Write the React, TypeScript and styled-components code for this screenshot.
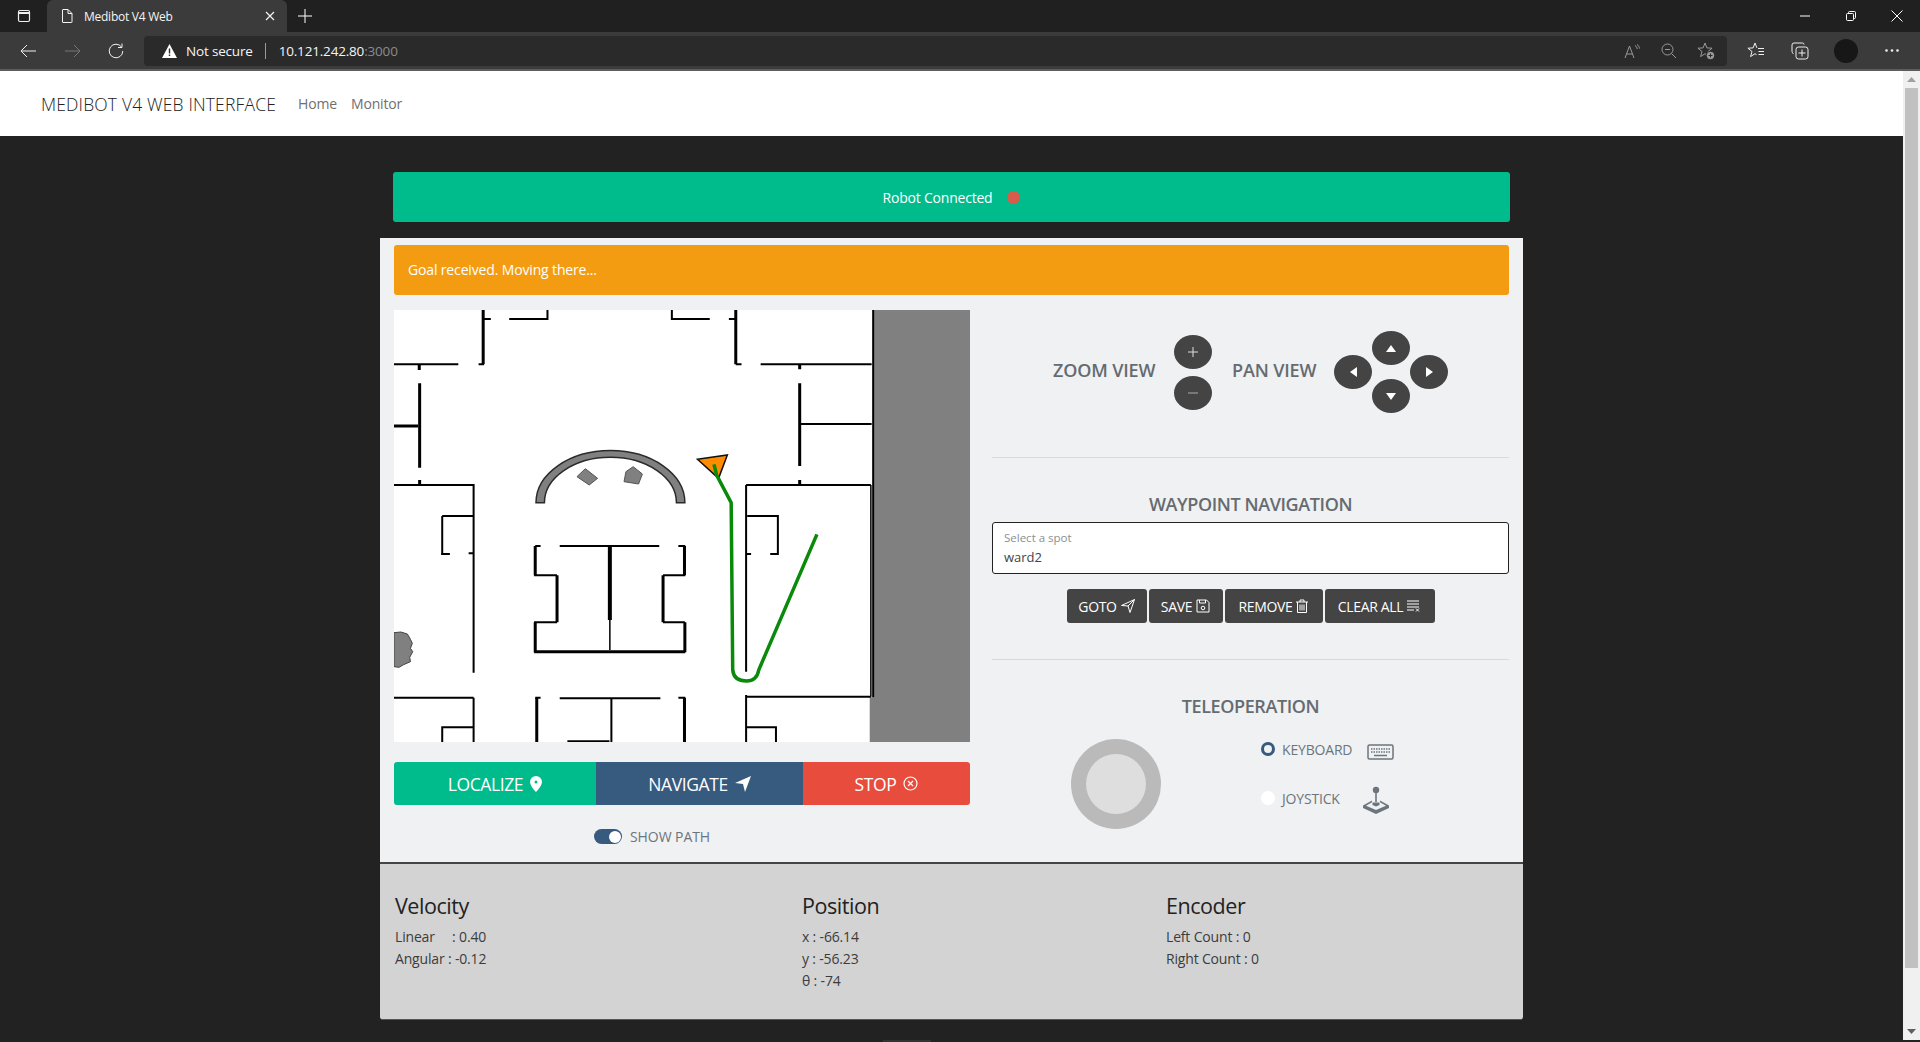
import React from "react";
import styled, { createGlobalStyle } from "styled-components";

const Global = createGlobalStyle`
  html, body { margin: 0; padding: 0; height: 100%; overflow: hidden; background: #222; }
  * { box-sizing: border-box; }
  body { font-family: "Open Sans", "Noto Sans", "Liberation Sans", sans-serif; }
`;

const Shell = styled.div`
  width: 1920px;
  height: 1042px;
  display: flex;
  flex-direction: column;
  overflow: hidden;
`;

/* ---------- browser chrome ---------- */
const TabStrip = styled.div`
  height: 32px;
  background: #202020;
  display: flex;
  align-items: flex-end;
  color: #fff;
`;
const WindowMenu = styled.div`
  width: 47px;
  height: 32px;
  display: flex;
  align-items: center;
  justify-content: center;
  color: #f0f0f0;
`;
const Tab = styled.div`
  width: 240px;
  height: 32px;
  background: #3b3b3b;
  border-radius: 6px 6px 0 0;
  display: flex;
  align-items: center;
  padding: 0 12px 0 13px;
  gap: 10px;
  font-size: 12px;
  letter-spacing: -0.25px;
  color: #f4f4f4;
`;
const TabTitle = styled.span`
  flex: 1;
`;
const NewTab = styled.div`
  width: 30px;
  height: 32px;
  display: flex;
  align-items: center;
  justify-content: center;
  margin-left: 3px;
`;
const Spacer = styled.div`
  flex: 1;
`;
const WinButton = styled.div`
  width: 46px;
  height: 32px;
  display: flex;
  align-items: center;
  justify-content: center;
`;
const ToolBar = styled.div`
  height: 39px;
  background: #3b3b3b;
  border-bottom: 2px solid #5d5d5d;
  display: flex;
  align-items: center;
  color: #f0f0f0;
`;
const NavIcon = styled.div<{ $w?: number }>`
  width: ${(p) => p.$w ?? 44}px;
  height: 30px;
  display: flex;
  align-items: center;
  justify-content: center;
`;
const AddressBar = styled.div`
  width: 1583px;
  height: 30px;
  margin: 1px 6px 0 2px;
  background: #2a2a2a;
  border-radius: 4px;
  display: flex;
  align-items: center;
  padding: 0 3px 0 18px;
  font-size: 13.5px;
  letter-spacing: -0.18px;
  color: #f5f5f5;
`;
const Secure = styled.span`
  margin-left: 9px;
`;
const Divider = styled.span`
  width: 1px;
  height: 16px;
  background: #9a9a9a;
  margin: 0 13px 0 12px;
`;
const Port = styled.span`
  color: #8b8b8b;
`;

/* ---------- page ---------- */
const Viewport = styled.div`
  flex: 1;
  display: flex;
  min-height: 0;
`;
const Page = styled.div`
  flex: 1;
  display: flex;
  flex-direction: column;
  background: #222;
  min-width: 0;
`;
const Scrollbar = styled.div`
  width: 17px;
  margin-bottom: 2px;
  background: #f0f0f0;
  display: flex;
  flex-direction: column;
  align-items: center;
`;
const ScrollArrow = styled.div`
  height: 17px;
  display: flex;
  align-items: center;
  justify-content: center;
`;
const ScrollThumb = styled.div`
  width: 13px;
  height: 880px;
  background: #c1c1c1;
`;
const NavBar = styled.nav`
  height: 65px;
  background: #fff;
  display: flex;
  align-items: center;
  padding-left: 41px;
`;
const Brand = styled.span`
  font-size: 17.5px;
  font-weight: 300;
  letter-spacing: 0.16px;
  color: #222;
  margin-right: 22px;
`;
const NavLink = styled.span`
  font-size: 14px;
  letter-spacing: -0.15px;
  color: #6f6f6f;
  margin-right: 14px;
`;
const Container = styled.div`
  width: 1143px;
  margin-left: 380px;
  display: flex;
  flex-direction: column;
`;
const Status = styled.div`
  height: 50px;
  margin: 36px 13px 16px;
  background: #00bc8c;
  border-radius: 3px;
  color: #fff;
  font-size: 14px;
  letter-spacing: -0.22px;
  display: flex;
  align-items: center;
  justify-content: center;
  gap: 15px;
`;
const StatusDot = styled.span`
  width: 13px;
  height: 13px;
  border-radius: 50%;
  background: #d85c4b;
`;
const Panel = styled.div`
  height: 624px;
  background: #eff1f3;
  padding: 7px 14px 0;
  display: flex;
  flex-direction: column;
`;
const Alert = styled.div`
  height: 50px;
  background: #f39c12;
  border-radius: 3px;
  color: #fff;
  font-size: 14px;
  letter-spacing: -0.15px;
  display: flex;
  align-items: center;
  padding: 0 0 2px 14px;
  flex-shrink: 0;
`;
const Columns = styled.div`
  display: flex;
  margin-top: 15px;
  gap: 22px;
`;
const LeftCol = styled.div`
  width: 576px;
  display: flex;
  flex-direction: column;
`;
const RightCol = styled.div`
  width: 517px;
  display: flex;
  flex-direction: column;
`;
const MapSvg = styled.svg`
  width: 576px;
  height: 432px;
  display: block;
  background: #fff;
`;
const ActionRow = styled.div`
  display: flex;
  height: 43px;
  margin-top: 20px;
`;
const ActionButton = styled.button<{ $w: number; $bg: string; $r?: string }>`
  width: ${(p) => p.$w}px;
  background: ${(p) => p.$bg};
  border: 0;
  border-radius: ${(p) => p.$r ?? "0"};
  color: #fff;
  font-family: inherit;
  font-size: 17.5px;
  letter-spacing: -0.4px;
  display: flex;
  align-items: center;
  justify-content: center;
  gap: 7px;
  padding: 0;
`;
const ToggleRow = styled.div`
  display: flex;
  align-items: center;
  margin-top: 22px;
  margin-left: 200px;
  gap: 8px;
  color: #6c757d;
  font-size: 14px;
  font-weight: 500;
  letter-spacing: -0.08px;
`;
const Toggle = styled.span`
  width: 28px;
  height: 15px;
  border-radius: 8px;
  background: #375a7f;
  position: relative;
`;
const ToggleKnob = styled.span`
  position: absolute;
  right: 1.5px;
  top: 1.5px;
  width: 12px;
  height: 12px;
  border-radius: 50%;
  background: #fff;
`;
const ViewControls = styled.div`
  height: 148px;
  display: flex;
  align-items: flex-start;
  padding-left: 61px;
  border-bottom: 1px solid #d8dade;
`;
const ViewLabel = styled.div<{ $w: number }>`
  width: ${(p) => p.$w}px;
  margin-top: 48px;
  font-size: 18px;
  line-height: 24px;
  font-weight: 600;
  letter-spacing: -0.15px;
  color: #666b70;
`;
const ZoomStack = styled.div`
  width: 38px;
  margin-top: 25px;
  margin-right: 20px;
  display: flex;
  flex-direction: column;
  gap: 7px;
`;
const Round = styled.button<{ $h?: number }>`
  width: 38px;
  height: ${(p) => p.$h ?? 34}px;
  border-radius: 50%;
  border: 0;
  padding: 0;
  background: #444;
  color: #fff;
  display: flex;
  align-items: center;
  justify-content: center;
`;
const PanGrid = styled.div`
  width: 114px;
  margin-top: 21px;
  display: grid;
  grid-template-columns: 38px 38px 38px;
  grid-template-rows: 24px 34px 24px;
`;
const PanCell = styled.div<{ $col: number; $row: string; $end?: boolean }>`
  grid-column: ${(p) => p.$col};
  grid-row: ${(p) => p.$row};
  align-self: ${(p) => (p.$end ? "end" : "start")};
`;
const SectionTitle = styled.div<{ $mt: number }>`
  margin-top: ${(p) => p.$mt}px;
  text-align: center;
  font-size: 18px;
  line-height: 24px;
  font-weight: 600;
  letter-spacing: -0.4px;
  color: #666b70;
`;
const SelectBox = styled.div`
  height: 52px;
  margin-top: 6px;
  background: #fff;
  border: 1px solid #222;
  border-radius: 3px;
  padding: 6px 11px;
`;
const SelectLabel = styled.div`
  font-size: 11.5px;
  line-height: 18px;
  color: #8a8f94;
`;
const SelectValue = styled.div`
  font-size: 13px;
  line-height: 20px;
  color: #444;
`;
const WayButtons = styled.div`
  display: flex;
  justify-content: center;
  gap: 2px;
  margin-top: 15px;
`;
const WayButton = styled.button<{ $w: number }>`
  width: ${(p) => p.$w}px;
  height: 34px;
  border: 0;
  border-radius: 3px;
  background: #444;
  color: #fff;
  font-family: inherit;
  font-size: 14px;
  letter-spacing: -0.35px;
  display: flex;
  align-items: center;
  justify-content: center;
  gap: 4px;
  padding: 0;
`;
const Rule = styled.div`
  height: 1px;
  background: #d8dade;
  margin-top: 36px;
`;
const TeleRow = styled.div`
  display: flex;
  margin-top: 21px;
`;
const JoyRing = styled.div`
  width: 90px;
  height: 90px;
  margin-left: 79px;
  border-radius: 50%;
  background: #bababa;
  display: flex;
  align-items: center;
  justify-content: center;
`;
const JoyCenter = styled.div`
  width: 60px;
  height: 60px;
  border-radius: 50%;
  background: #dedede;
`;
const ModeColumn = styled.div`
  margin-left: 100px;
  margin-top: -12px;
  display: flex;
  flex-direction: column;
`;
const ModeRow = styled.div<{ $h: number }>`
  height: ${(p) => p.$h}px;
  display: flex;
  align-items: center;
  color: #6c757d;
  font-size: 14px;
  letter-spacing: -0.18px;
`;
const Radio = styled.span<{ $on?: boolean }>`
  width: 14px;
  height: 14px;
  border-radius: 50%;
  border: ${(p) => (p.$on ? "3.5px solid #375a7f" : "0")};
  margin-right: 7px;
  background-color: ${(p) => (p.$on ? "#eff1f3" : "#fff")};
`;
const ModeIcon = styled.span<{ $ml: number; $mt: number }>`
  margin: ${(p) => p.$mt}px 0 0 ${(p) => p.$ml}px;
  display: flex;
  color: #6c757d;
`;
const Telemetry = styled.div`
  height: 158px;
  background: #d3d3d3;
  border-top: 2px solid #444;
  border-bottom: 1px solid #555;
  border-radius: 0 0 3px 3px;
  display: flex;
  padding: 28px 0 0 15px;
`;
const TeleCol = styled.div<{ $w: number }>`
  width: ${(p) => p.$w}px;
`;
const TeleTitle = styled.div`
  font-size: 21.5px;
  line-height: 28px;
  letter-spacing: -0.45px;
  color: #222;
  margin-bottom: 6px;
`;
const TeleLine = styled.div`
  font-size: 14px;
  line-height: 22px;
  letter-spacing: -0.17px;
  color: #3c3c3c;
  white-space: pre;
`;
const PageFoot = styled.div`
  width: 48px;
  height: 2px;
  margin: 20px 0 0 883px;
  background: #333;
`;

const Wall = ({ d, w = 3 }: { d: string; w?: number }) => (
  <path d={d} fill="none" stroke="#000" strokeWidth={w} vectorEffect="non-scaling-stroke" />
);

const MapView = () => (
  <MapSvg viewBox="37 30 1505 1296" preserveAspectRatio="none">
    <polygon points="1290,30 1542,30 1542,1326 1280,1326 1280,1192 1290,1192" fill="#808080" />
    <Wall w={2} d="M1289 30V1192" />
    <Wall w={1.5} d="M1283 555V1190" />
    <Wall w={2} d="M37 193H205 M258 193H272 M272 57H290 M338 57H438V30 M763 30V57H862 M912 57H930 M930 193H945 M995 193H1285 M1097 372H1285" />
    <Wall w={3} d="M270 30V193 M930 30V193 M103 193V210 M1097 193V208 M104 250V503 M1097 250V498 M104 540V555 M1097 540V555" />
    <Wall w={3} d="M37 378H100" />
    <Wall w={2} d="M37 555H245V1118 M163 648H245 M163 648V762 M160 762H183 M232 760H245" />
    <Wall w={2} d="M957 555H1283 M957 555V1115 M960 648H1040V762H1020 M957 762H970" />
    <Wall w={2} d="M406 738H420 M470 738H730 M780 738H798 M798 826H740 M797 967H740 M403 826H463 M403 967H463" />
    <Wall w={3} d="M740 826V967 M463 826V967 M406 967V1057 M797 967V1057 M406 738V826 M796 738V826" />
    <Wall w={4} d="M601 738V960" />
    <Wall w={3} d="M403 1055H798" />
    <Wall w={1.5} d="M601 960V1050" />
    <Wall w={2} d="M37 1193H245 M245 1193V1326 M163 1326V1282H245 M420 1193H406 M470 1195H733 M605 1195V1326 M780 1193H798 M955 1190H1283 M957 1185V1326 M957 1282H1035V1326 M490 1324H600" />
    <Wall w={3} d="M410 1193V1326 M796 1193V1326" />
    <path d="M408 608A194 156 0 0 1 797 608L775 608A172 136 0 0 0 430 608Z" fill="#808080" stroke="#2a2a2a" strokeWidth="1.5" vectorEffect="non-scaling-stroke" />
    <polygon points="537,506 569,535 547,555 515,530" fill="#808080" stroke="#555" strokeWidth="1" vectorEffect="non-scaling-stroke" />
    <polygon points="662,500 686,522 676,552 638,545 643,515" fill="#808080" stroke="#555" strokeWidth="1" vectorEffect="non-scaling-stroke" />
    <polygon points="37,998 55,996 72,1002 80,1018 85,1030 80,1045 86,1055 78,1072 80,1085 62,1094 50,1102 37,1100" fill="#808080" stroke="#444" strokeWidth="1" vectorEffect="non-scaling-stroke" />
    <polygon points="830,478 908,465 885,535" fill="#ff8c00" stroke="#111" strokeWidth="1.5" vectorEffect="non-scaling-stroke" />
    <path d="M873 493L880 525L918 608L922 1110Q925 1143 958 1143Q985 1143 990 1110L1142 703" fill="none" stroke="#0a8a0a" strokeWidth="3.5" vectorEffect="non-scaling-stroke" />
  </MapSvg>
);

const S = { fill: "none", stroke: "currentColor" } as const;

export default function App() {
  return (
    <Shell>
      <Global />
      <TabStrip>
        <WindowMenu>
          <svg width="16" height="16" viewBox="0 0 16 16" {...S} strokeWidth="1.2">
            <rect x="2.5" y="2.5" width="11" height="11" rx="1.5" />
            <path d="M2.5 5h11" strokeWidth="2" />
          </svg>
        </WindowMenu>
        <Tab>
          <svg width="14" height="16" viewBox="0 0 14 16" {...S} strokeWidth="1">
            <path d="M3 1.5h5l4 4V14a.5.5 0 0 1-.5.5h-8.500a.5.5 0 0 1-.5-.5V2a.5.5 0 0 1 .5-.5zM8 1.500V5.500h4" />
          </svg>
          <TabTitle>Medibot V4 Web</TabTitle>
          <svg width="10" height="10" viewBox="0 0 10 10" {...S} strokeWidth="1.2"><path d="M1 1l8 8M9 1l-8 8" /></svg>
        </Tab>
        <NewTab>
          <svg width="14" height="14" viewBox="0 0 14 14" {...S} strokeWidth="1"><path d="M7 0v14M0 7h14" /></svg>
        </NewTab>
        <Spacer />
        <WinButton>
          <svg width="10" height="2" viewBox="0 0 10 2" {...S}><path d="M0 1h10" /></svg>
        </WinButton>
        <WinButton>
          <svg width="10" height="10" viewBox="0 0 10 10" {...S}><rect x=".5" y="2.500" width="7" height="7" rx="1" /><path d="M2.500 2.500V1.500a1 1 0 0 1 1-1h5a1 1 0 0 1 1 1v5a1 1 0 0 1-1 1h-1" /></svg>
        </WinButton>
        <WinButton>
          <svg width="12" height="12" viewBox="0 0 12 12" {...S}><path d="M.5.5l11 11M11.500.5l-11 11" /></svg>
        </WinButton>
      </TabStrip>
      <ToolBar>
        <NavIcon $w={56}>
          <svg width="16" height="14" viewBox="0 0 16 14" {...S}><path d="M16 7H1M7 1L1 7l6 6" /></svg>
        </NavIcon>
        <NavIcon $w={34}>
          <svg width="16" height="14" viewBox="0 0 16 14" fill="none" stroke="#777"><path d="M0 7h15M9 1l6 6-6 6" /></svg>
        </NavIcon>
        <NavIcon $w={52}>
          <svg width="16" height="16" viewBox="0 0 16 16" {...S}><path d="M13.500 4A6.800 6.800 0 1 0 14.800 8M14 .5V4.500H10" /></svg>
        </NavIcon>
        <AddressBar>
          <svg width="15" height="14" viewBox="0 0 15 14">
            <path d="M7.500 0L15 14H0z" fill="#fff" />
            <path d="M7.500 4.500v5M7.500 10.500v1.500" stroke="#2a2a2a" strokeWidth="1.400" />
          </svg>
          <Secure>Not secure</Secure>
          <Divider />
          <span>10.121.242.80</span>
          <Port>:3000</Port>
          <Spacer />
          <NavIcon $w={37}>
            <svg width="16" height="15" viewBox="0 0 16 15" fill="none" stroke="#9a9a9a"><path d="M1 14L5.500 2 10 14M2.800 10h5.500M11 1.500c1.500 1 2 2 2.200 3.500M13 .5c1.500 1 2.300 2.500 2.500 4" /></svg>
          </NavIcon>
          <NavIcon $w={37}>
            <svg width="16" height="16" viewBox="0 0 16 16" fill="none" stroke="#9a9a9a"><circle cx="6.500" cy="6.500" r="5.500" /><path d="M10.500 10.500L15 15M4 6.500h5" /></svg>
          </NavIcon>
          <NavIcon $w={37}>
            <svg width="18" height="18" viewBox="0 0 18 18" fill="none" stroke="#9a9a9a"><path d="M8 1L9.900 5.900 15.100 6.200 11 9.500 12.400 14.600 8 11.700 3.600 14.600 5 9.500 .9 6.200 6.100 5.900z" /><circle cx="13.500" cy="13.500" r="4.200" fill="#9a9a9a" stroke="#2a2a2a" /><path d="M13.500 11.500v4M11.500 13.500h4" stroke="#2a2a2a" /></svg>
          </NavIcon>
        </AddressBar>
        <NavIcon $w={46}>
          <svg width="18" height="17" viewBox="0 0 18 17" {...S}><path d="M9.900 5.900L8 1 6.100 5.900 .9 6.200 5 9.500 3.600 14.600 8 11.700 9.500 12.700" /><path d="M11 6.500h6M11.500 9.500h5.500M11.500 12.500h5.500" /></svg>
        </NavIcon>
        <NavIcon $w={42}>
          <svg width="18" height="18" viewBox="0 0 18 18" {...S}><path d="M13 2.500A1.500 1.500 0 0 0 11.500 1H3a2 2 0 0 0-2 2v6c0 1 .5 2 1.500 3" /><rect x="5" y="5" width="12" height="12" rx="2.500" /><path d="M11 7.500v7M7.500 11h7" /></svg>
        </NavIcon>
        <NavIcon $w={50}>
          <svg width="24" height="24" viewBox="0 0 24 24"><circle cx="12" cy="12" r="12" fill="#171717" /></svg>
        </NavIcon>
        <NavIcon $w={42}>
          <svg width="14" height="3" viewBox="0 0 14 3" fill="#eee"><circle cx="1.500" cy="1.500" r="1.300" /><circle cx="7" cy="1.500" r="1.300" /><circle cx="12.500" cy="1.500" r="1.300" /></svg>
        </NavIcon>
      </ToolBar>
      <Viewport>
        <Page>
          <NavBar>
            <Brand>MEDIBOT V4 WEB INTERFACE</Brand>
            <NavLink>Home</NavLink>
            <NavLink>Monitor</NavLink>
          </NavBar>
          <Container>
            <Status>
              <span>Robot Connected</span>
              <StatusDot />
            </Status>
            <Panel>
              <Alert>Goal received. Moving there...</Alert>
              <Columns>
                <LeftCol>
                  <MapView />
                  <ActionRow>
                    <ActionButton $w={202} $bg="#00bc8c" $r="3px 0 0 3px">
                      LOCALIZE
                      <svg width="12" height="16" viewBox="0 0 12 16"><path fillRule="evenodd" fill="#fff" d="M6 0a6 6 0 0 1 6 6c0 4-6 10-6 10S0 10 0 6a6 6 0 0 1 6-6zm0 4.500a1.500 1.500 0 1 0 0 3 1.500 1.500 0 0 0 0-3z" /></svg>
                    </ActionButton>
                    <ActionButton $w={207} $bg="#375a7f">
                      NAVIGATE
                      <svg width="16" height="16" viewBox="0 0 16 16"><path fill="#fff" d="M16 0L10 16 8 8 0 7z" /></svg>
                    </ActionButton>
                    <ActionButton $w={167} $bg="#e74c3c" $r="0 3px 3px 0">
                      STOP
                      <svg width="15" height="15" viewBox="0 0 15 15" {...S} strokeWidth="1.200"><circle cx="7.500" cy="7.500" r="6.500" /><path d="M5 5l5 5M10 5l-5 5" /></svg>
                    </ActionButton>
                  </ActionRow>
                  <ToggleRow>
                    <Toggle><ToggleKnob /></Toggle>
                    SHOW PATH
                  </ToggleRow>
                </LeftCol>
                <RightCol>
                  <ViewControls>
                    <ViewLabel $w={121}>ZOOM VIEW</ViewLabel>
                    <ZoomStack>
                      <Round>
                        <svg width="10" height="10" viewBox="0 0 10 10" stroke="#ddd" strokeWidth="1"><path d="M5 0v10M0 5h10" /></svg>
                      </Round>
                      <Round>
                        <svg width="10" height="2" viewBox="0 0 10 2" stroke="#888" strokeWidth="1.500"><path d="M0 1h10" /></svg>
                      </Round>
                    </ZoomStack>
                    <ViewLabel $w={102}>PAN VIEW</ViewLabel>
                    <PanGrid>
                      <PanCell $col={2} $row="1 / span 2">
                        <Round>
                          <svg width="10" height="7" viewBox="0 0 10 7" fill="#fff"><path d="M5 0l5 7H0z" /></svg>
                        </Round>
                      </PanCell>
                      <PanCell $col={1} $row="2">
                        <Round>
                          <svg width="7" height="10" viewBox="0 0 7 10" fill="#fff"><path d="M0 5l7-5v10z" /></svg>
                        </Round>
                      </PanCell>
                      <PanCell $col={3} $row="2">
                        <Round>
                          <svg width="7" height="10" viewBox="0 0 7 10" fill="#fff"><path d="M7 5L0 0v10z" /></svg>
                        </Round>
                      </PanCell>
                      <PanCell $col={2} $row="2 / span 2" $end>
                        <Round>
                          <svg width="10" height="7" viewBox="0 0 10 7" fill="#fff"><path d="M5 7l5-7H0z" /></svg>
                        </Round>
                      </PanCell>
                    </PanGrid>
                  </ViewControls>
                  <SectionTitle $mt={34}>WAYPOINT NAVIGATION</SectionTitle>
                  <SelectBox>
                    <SelectLabel>Select a spot</SelectLabel>
                    <SelectValue>ward2</SelectValue>
                  </SelectBox>
                  <WayButtons>
                    <WayButton $w={80}>
                      GOTO
                      <svg width="14" height="14" viewBox="0 0 14 14" {...S}><path d="M13.500.5L9 13.500 7 7 .5 6.500zM13.500.5L7 7" /></svg>
                    </WayButton>
                    <WayButton $w={74}>
                      SAVE
                      <svg width="14" height="14" viewBox="0 0 14 14" {...S}><path d="M1 1h9.500L13 3.500V13H1zM3.500 1v3h6V1" /><circle cx="7" cy="9" r="1.800" /></svg>
                    </WayButton>
                    <WayButton $w={98}>
                      REMOVE
                      <svg width="12" height="14" viewBox="0 0 12 14" {...S}><path d="M0 3h12M4 3V1h4v2M1.500 3v10.500h9V3M4 5.500v6M6 5.500v6M8 5.500v6" /></svg>
                    </WayButton>
                    <WayButton $w={110}>
                      CLEAR ALL
                      <svg width="14" height="12" viewBox="0 0 14 12" {...S}><path d="M0 1h12M0 4h12M0 7h12M0 10h7M9 8.500l3 3M12 8.500l-3 3" /></svg>
                    </WayButton>
                  </WayButtons>
                  <Rule />
                  <SectionTitle $mt={34}>TELEOPERATION</SectionTitle>
                  <TeleRow>
                    <JoyRing><JoyCenter /></JoyRing>
                    <ModeColumn>
                      <ModeRow $h={44}>
                        <Radio $on />
                        KEYBOARD
                        <ModeIcon $ml={15} $mt={5}>
                          <svg width="27" height="16" viewBox="0 0 27 16" {...S}><rect x="1" y="1" width="25" height="14" rx="1.500" strokeWidth="1.500" /><path d="M4 5h19M4 8h19" strokeDasharray="1.500 1" strokeWidth="1.500" /><path d="M7 11.500h13" strokeWidth="1.500" /></svg>
                        </ModeIcon>
                      </ModeRow>
                      <ModeRow $h={54}>
                        <Radio />
                        JOYSTICK
                        <ModeIcon $ml={22} $mt={4}>
                          <svg width="28" height="28" viewBox="0 0 28 28" fill="currentColor"><circle cx="14" cy="4" r="3.200" /><path d="M13.200 6h1.600v10h-1.600z" /><path fillRule="evenodd" d="M10 14.500L1 19.500V22l13 6 13-6v-2.500l-9-5v1.800l6 3.400L14 24 4 19.700l6-3.400z" /><path d="M10.500 16.500h7v2.500l-3.500 1.500-3.500-1.500z" /></svg>
                        </ModeIcon>
                      </ModeRow>
                    </ModeColumn>
                  </TeleRow>
                </RightCol>
              </Columns>
            </Panel>
            <Telemetry>
              <TeleCol $w={407}>
                <TeleTitle>Velocity</TeleTitle>
                <TeleLine>{"Linear     : 0.40"}</TeleLine>
                <TeleLine>Angular : -0.12</TeleLine>
              </TeleCol>
              <TeleCol $w={364}>
                <TeleTitle>Position</TeleTitle>
                <TeleLine>x : -66.14</TeleLine>
                <TeleLine>y : -56.23</TeleLine>
                <TeleLine>θ : -74</TeleLine>
              </TeleCol>
              <TeleCol $w={300}>
                <TeleTitle>Encoder</TeleTitle>
                <TeleLine>Left Count : 0</TeleLine>
                <TeleLine>Right Count : 0</TeleLine>
              </TeleCol>
            </Telemetry>
          </Container>
          <PageFoot />
        </Page>
        <Scrollbar>
          <ScrollArrow>
            <svg width="9" height="5" viewBox="0 0 9 5" fill="#a0a0a0"><path d="M4.500 0L9 5H0z" /></svg>
          </ScrollArrow>
          <ScrollThumb />
          <Spacer />
          <ScrollArrow>
            <svg width="9" height="5" viewBox="0 0 9 5" fill="#606060"><path d="M4.500 5L9 0H0z" /></svg>
          </ScrollArrow>
        </Scrollbar>
      </Viewport>
    </Shell>
  );
}
